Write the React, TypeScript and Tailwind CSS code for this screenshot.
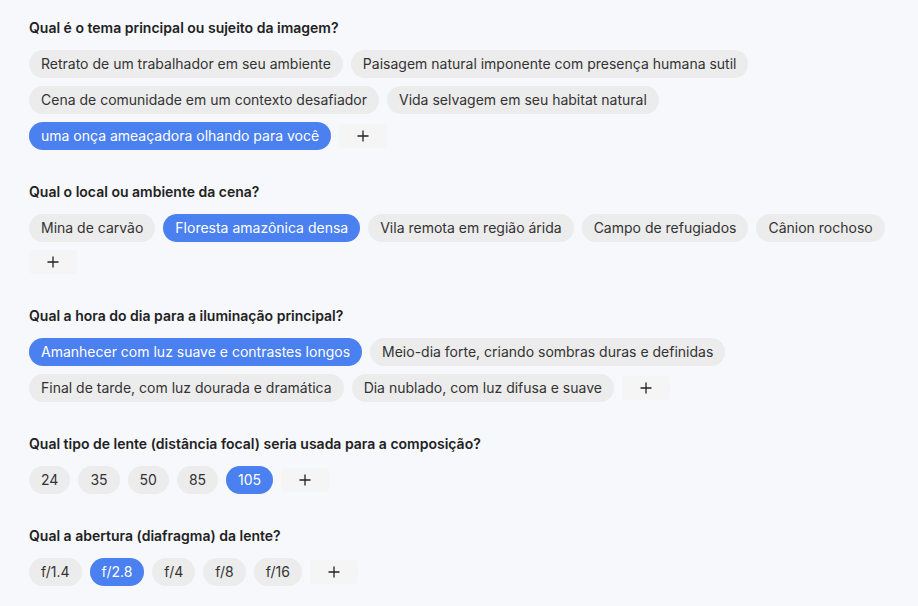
import React from "react";

type Section = { q: string; options: string[]; selected: string };

const sections: Section[] = [
  {
    q: "Qual é o tema principal ou sujeito da imagem?",
    options: [
      "Retrato de um trabalhador em seu ambiente",
      "Paisagem natural imponente com presença humana sutil",
      "Cena de comunidade em um contexto desafiador",
      "Vida selvagem em seu habitat natural",
      "uma onça ameaçadora olhando para você",
    ],
    selected: "uma onça ameaçadora olhando para você",
  },
  {
    q: "Qual o local ou ambiente da cena?",
    options: [
      "Mina de carvão",
      "Floresta amazônica densa",
      "Vila remota em região árida",
      "Campo de refugiados",
      "Cânion rochoso",
    ],
    selected: "Floresta amazônica densa",
  },
  {
    q: "Qual a hora do dia para a iluminação principal?",
    options: [
      "Amanhecer com luz suave e contrastes longos",
      "Meio-dia forte, criando sombras duras e definidas",
      "Final de tarde, com luz dourada e dramática",
      "Dia nublado, com luz difusa e suave",
    ],
    selected: "Amanhecer com luz suave e contrastes longos",
  },
  {
    q: "Qual tipo de lente (distância focal) seria usada para a composição?",
    options: ["24", "35", "50", "85", "105"],
    selected: "105",
  },
  {
    q: "Qual a abertura (diafragma) da lente?",
    options: ["f/1.4", "f/2.8", "f/4", "f/8", "f/16"],
    selected: "f/2.8",
  },
];

function PlusIcon() {
  return (
    <svg width="12" height="12" viewBox="0 0 12 12" fill="none">
      <path d="M6 0.5V11.5M0.5 6H11.5" stroke="#222" strokeWidth="1.3" />
    </svg>
  );
}

export default function App() {
  return (
    <div
      className="min-h-[606px] w-full bg-[#f6f8fc] pl-[29px] pr-[29px] pt-[18px]"
      style={{ fontFamily: "Inter, 'Noto Sans', sans-serif" }}
    >
      <div className="flex flex-col gap-8">
        {sections.map((s) => (
          <div key={s.q} className="flex flex-col">
            <h2 className="mb-3 text-[14px] leading-5 font-semibold text-[#222]">{s.q}</h2>
            <div className="flex flex-wrap items-center gap-2">
              {s.options.map((o) => {
                const sel = o === s.selected;
                return (
                  <button
                    key={o}
                    className={
                      sel
                        ? "h-7 rounded-full bg-[#4a80f0] px-3 text-[14px] leading-7 text-white"
                        : "h-7 rounded-full bg-[#ececec] px-3 text-[14px] leading-7 text-[#333]"
                    }
                  >
                    {o}
                  </button>
                );
              })}
              <button className="flex h-6 w-12 items-center justify-center rounded-sm bg-[#f5f5f5]">
                <PlusIcon />
              </button>
            </div>
          </div>
        ))}
      </div>
    </div>
  );
}
